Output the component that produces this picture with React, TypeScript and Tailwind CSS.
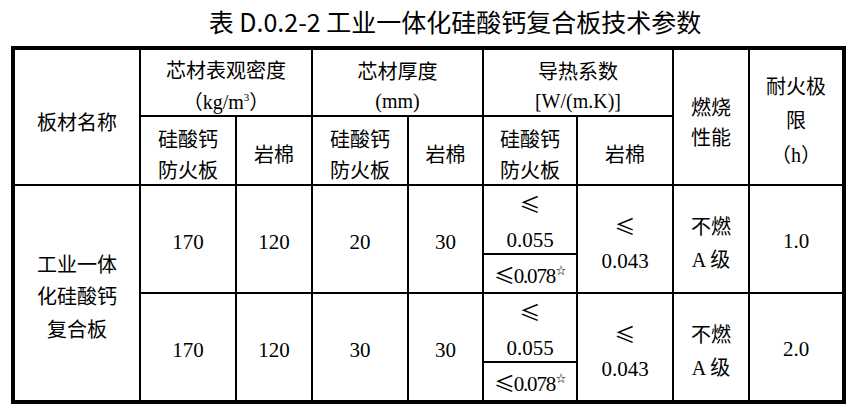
import React from "react";

const cell = "bg-white flex flex-col items-center justify-center text-center";
const cjk = "font-['Noto_Sans_CJK_SC',sans-serif]";

function Le() {
  return <span className={cjk}>≤</span>;
}

function Lt078() {
  return (
    <div className="leading-[30px] text-[21px] tracking-[-1.2px] font-['Liberation_Serif',serif]">
      <Le />
      0.078
      <sup className={`${cjk} text-[10px] tracking-normal relative -top-[0.9em] ml-[1px]`}>☆</sup>
    </div>
  );
}

function DataBlock({ r, thick, fire }: { r: number; thick: string; fire: string }) {
  const rs = r === 3 ? "row-start-3" : "row-start-5";
  const rs2 = r === 3 ? "row-start-4" : "row-start-6";
  return (
    <>
      <div className={`${cell} col-start-2 ${rs} row-span-2 pt-[7px] text-[21px]`}>170</div>
      <div className={`${cell} col-start-3 ${rs} row-span-2 pt-[7px] text-[21px]`}>120</div>
      <div className={`${cell} col-start-4 ${rs} row-span-2 pt-[7px] text-[21px]`}>{thick}</div>
      <div className={`${cell} col-start-5 ${rs} row-span-2 pt-[7px] text-[21px]`}>30</div>
      <div className={`${cell} col-start-6 ${rs} pt-[5px] text-[21px] leading-[35px]`}>
        <div><Le /></div>
        <div>0.055</div>
      </div>
      <div className={`${cell} col-start-6 ${rs2} pt-[3px]`}>
        <Lt078 />
      </div>
      <div className={`${cell} col-start-7 ${rs} row-span-2 pt-[7px] text-[21px] leading-[34px]`}>
        <div><Le /></div>
        <div>0.043</div>
      </div>
      <div className={`${cell} col-start-8 ${rs} row-span-2 pt-[8px] text-[20px] leading-[33px]`}>
        <div className={cjk}>不燃</div>
        <div>
          A <span className={cjk}>级</span>
        </div>
      </div>
      <div className={`${cell} col-start-9 ${rs} row-span-2 pt-[6px] text-[21px]`}>{fire}</div>
    </>
  );
}

export default function App() {
  return (
    <div className="w-[858px] h-[413px] bg-white text-black font-['Liberation_Serif','Noto_Sans_CJK_SC',serif]">
      <div className="h-[46px] flex items-center justify-center pl-[52px] pb-[4px] text-[25px] font-['Noto_Sans_CJK_SC',sans-serif] leading-none">
        表 D.0.2-2 工业一体化硅酸钙复合板技术参数
      </div>
      <div className="ml-[11px] w-[835px] h-[358px] border-4 border-black bg-black grid grid-cols-[124px_94px_74px_94px_73px_92px_94px_74px_92px] grid-rows-[65px_67px_67px_37px_67px_37px] gap-[2px] text-[20px]">
        {/* header row 1 */}
        <div className={`${cell} col-start-1 row-start-1 row-span-2 pt-[9px] ${cjk}`}>板材名称</div>
        <div className={`${cell} col-start-2 col-span-2 row-start-1 pt-[7px] leading-[31px]`}>
          <div className={cjk}>芯材表观密度</div>
          <div>
            <span className={cjk}>（</span>kg/m<sup className="text-[11px] relative -top-[0.75em]">3</sup>
            <span className={cjk}>）</span>
          </div>
        </div>
        <div className={`${cell} col-start-4 col-span-2 row-start-1 pt-[7px] leading-[31px]`}>
          <div className={cjk}>芯材厚度</div>
          <div className="text-[20px]">(mm)</div>
        </div>
        <div className={`${cell} col-start-6 col-span-2 row-start-1 pt-[7px] leading-[31px]`}>
          <div className={cjk}>导热系数</div>
          <div className="text-[20px]">[W/(m.K)]</div>
        </div>
        <div className={`${cell} col-start-8 row-start-1 row-span-2 pt-[9px] leading-[30px] ${cjk}`}>
          <div>燃烧</div>
          <div>性能</div>
        </div>
        <div className={`${cell} col-start-9 row-start-1 row-span-2 pt-[7px] leading-[34px]`}>
          <div className={cjk}>耐火极</div>
          <div className={cjk}>限</div>
          <div>
            <span className={cjk}>（</span>h<span className={cjk}>）</span>
          </div>
        </div>

        {/* header row 2 */}
        <div className={`${cell} col-start-2 row-start-2 pt-[7px] leading-[31.5px] ${cjk}`}>
          <div>硅酸钙</div>
          <div>防火板</div>
        </div>
        <div className={`${cell} col-start-3 row-start-2 pt-[7px] ${cjk}`}>岩棉</div>
        <div className={`${cell} col-start-4 row-start-2 pt-[7px] leading-[31.5px] ${cjk}`}>
          <div>硅酸钙</div>
          <div>防火板</div>
        </div>
        <div className={`${cell} col-start-5 row-start-2 pt-[7px] ${cjk}`}>岩棉</div>
        <div className={`${cell} col-start-6 row-start-2 pt-[7px] leading-[31.5px] ${cjk}`}>
          <div>硅酸钙</div>
          <div>防火板</div>
        </div>
        <div className={`${cell} col-start-7 row-start-2 pt-[7px] ${cjk}`}>岩棉</div>

        {/* data */}
        <div className={`${cell} col-start-1 row-start-3 row-span-4 pt-[7px] leading-[32.5px] ${cjk}`}>
          <div>工业一体</div>
          <div>化硅酸钙</div>
          <div>复合板</div>
        </div>
        <DataBlock r={3} thick="20" fire="1.0" />
        <DataBlock r={5} thick="30" fire="2.0" />
      </div>
    </div>
  );
}
